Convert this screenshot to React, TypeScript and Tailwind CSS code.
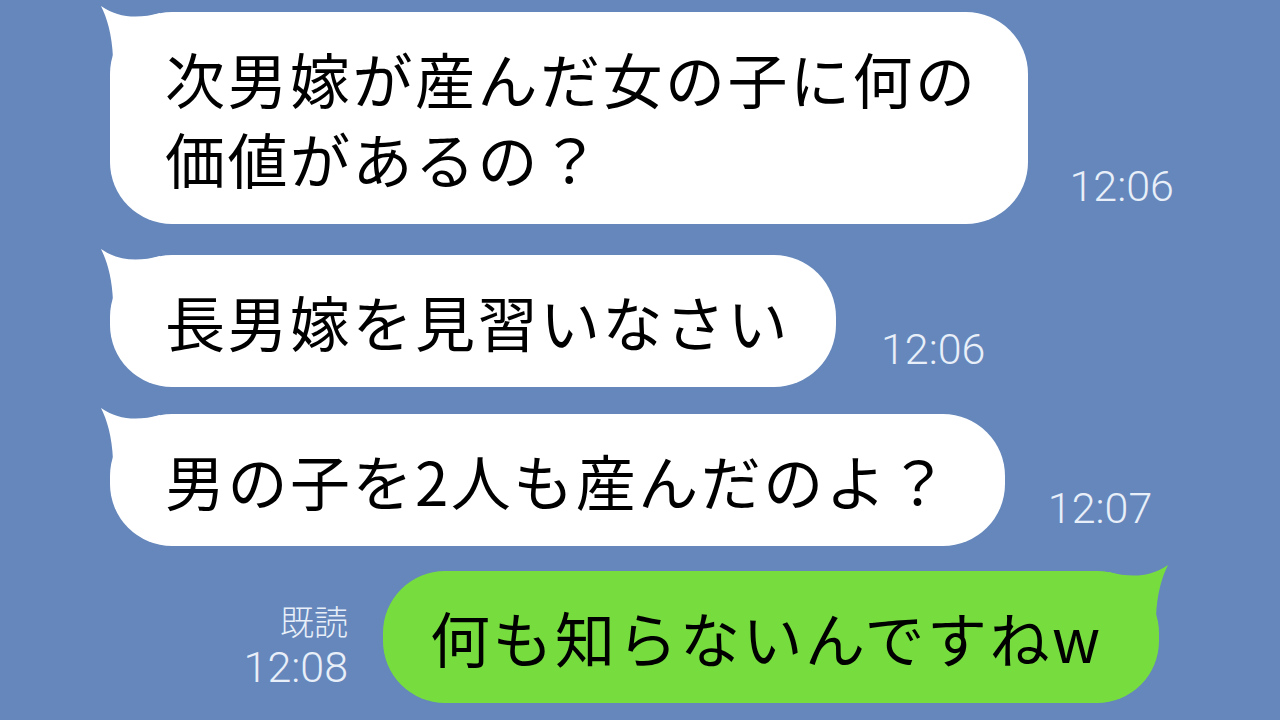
import React from 'react';

const font = { fontFamily: '"Noto Sans CJK JP", "Noto Sans", sans-serif' };

const LeftTail: React.FC = () => (
  <svg className="absolute left-[-12px] top-[-8px]" width="64" height="56" viewBox="0 0 64 56">
    <path d="M3 2 C 9 14 14 30 15 54 L 62 54 L 62 9 C 40 15 20 14 3 2 Z" fill="#ffffff" />
  </svg>
);

const RightTail: React.FC = () => (
  <svg className="absolute right-[-12px] top-[-8px]" width="64" height="56" viewBox="0 0 64 56">
    <path d="M61 2 C 55 14 50 30 49 54 L 2 54 L 2 9 C 24 15 44 14 61 2 Z" fill="#77dd3e" />
  </svg>
);

const Stamp: React.FC<{ time: string; mb: string }> = ({ time, mb }) => (
  <div className={`font-['Roboto',sans-serif] text-[43px] leading-none font-light text-[#e8eff8] ${mb}`}>{time}</div>
);

const LeftBubble: React.FC<{ lines: string[]; pr: string }> = ({ lines, pr }) => (
  <div className={`relative bg-white rounded-[62px] pl-[55px] py-[26px] ${pr}`}>
    <LeftTail />
    <div className="relative text-[60px] leading-[80px] tracking-[2.5px] text-black whitespace-nowrap">
      {lines.map(l => (
        <div key={l}>{l}</div>
      ))}
    </div>
  </div>
);

const App: React.FC = () => {
  return (
    <div className="w-[1280px] h-[720px] overflow-hidden bg-[#6587bc]" style={font}>
      <div className="flex flex-col pl-[110px] pt-[12px]">
        {/* incoming */}
        <div className="flex items-end gap-[42px]">
          <LeftBubble lines={['次男嫁が産んだ女の子に何の', '価値があるの？']} pr="pr-[50px]" />
          <Stamp time="12:06" mb="mb-[16px]" />
        </div>

        <div className="flex items-end gap-[45px] mt-[31px]">
          <LeftBubble lines={['長男嫁を見習いなさい']} pr="pr-[46px]" />
          <Stamp time="12:06" mb="mb-[16px]" />
        </div>

        <div className="flex items-end gap-[43px] mt-[27px]">
          <LeftBubble lines={['男の子を2人も産んだのよ？']} pr="pr-[54px]" />
          <Stamp time="12:07" mb="mb-[16px]" />
        </div>

        {/* outgoing */}
        <div className="flex items-end gap-[35px] mt-[25px]">
          <div className="w-[238px] flex flex-col items-end gap-[8px] text-[#e8eff8] mb-[14px]">
            <div className="text-[34px] leading-none font-light">既読</div>
            <div className="font-['Roboto',sans-serif] text-[43px] leading-none font-light">12:08</div>
          </div>
          <div className="relative bg-[#77dd3e] rounded-[62px] pl-[47px] pr-[56px] py-[26px]">
            <RightTail />
            <div className="relative text-[60px] leading-[80px] tracking-[2.5px] text-black whitespace-nowrap">
              何も知らないんですねw
            </div>
          </div>
        </div>
      </div>
    </div>
  );
};

export default App;
